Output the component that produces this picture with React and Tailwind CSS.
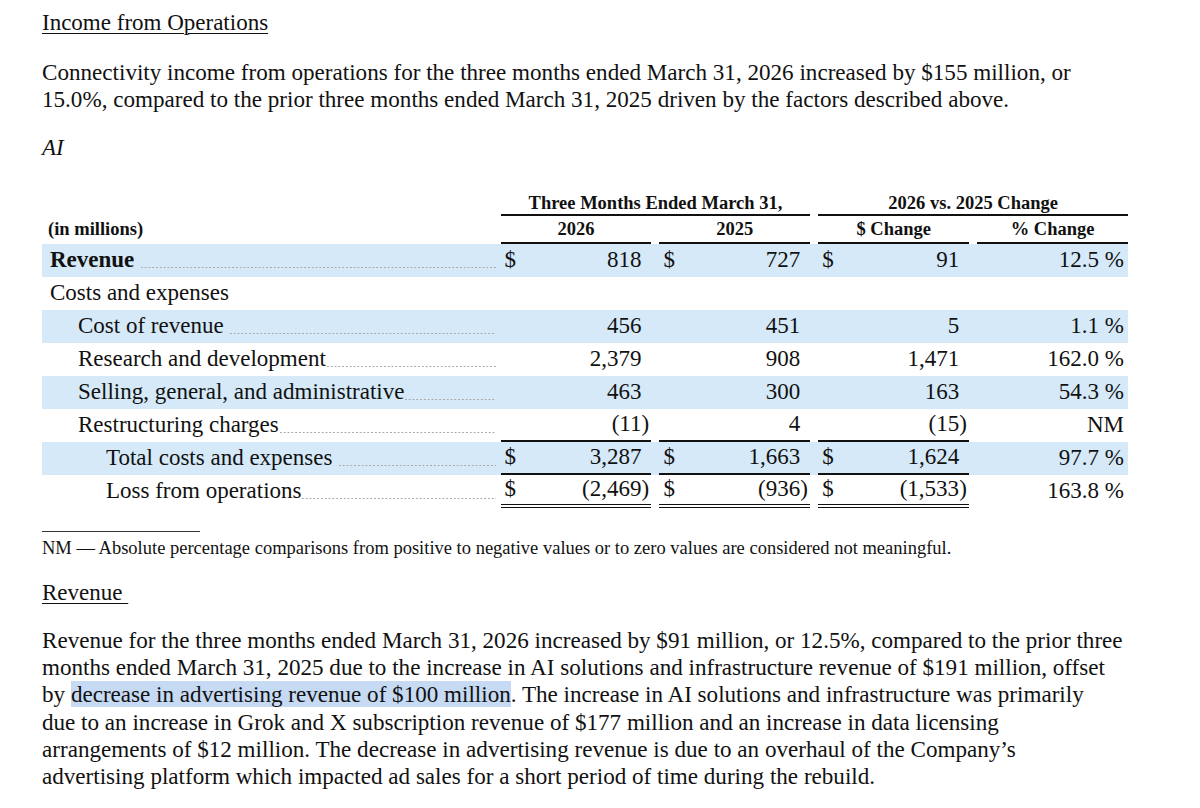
import React from "react";

const rows = [
  { label: "Revenue", bold: true, indent: 0, dots: true, space: true, bg: true, dollar: true, vals: ["818", "727", "91"], pct: "12.5 %" },
  { label: "Costs and expenses", indent: 0, dots: false, bg: false, vals: ["", "", ""], pct: "" },
  { label: "Cost of revenue", indent: 1, dots: true, space: true, bg: true, vals: ["456", "451", "5"], pct: "1.1 %" },
  { label: "Research and development", indent: 1, dots: true, bg: false, vals: ["2,379", "908", "1,471"], pct: "162.0 %" },
  { label: "Selling, general, and administrative", indent: 1, dots: true, bg: true, vals: ["463", "300", "163"], pct: "54.3 %" },
  { label: "Restructuring charges", indent: 1, dots: true, bg: false, vals: ["(11)", "4", "(15)"], pct: "NM", line: "single" },
  { label: "Total costs and expenses", indent: 2, dots: true, space: true, bg: true, dollar: true, vals: ["3,287", "1,663", "1,624"], pct: "97.7 %", line: "single" },
  { label: "Loss from operations", indent: 2, dots: true, bg: false, dollar: true, vals: ["(2,469)", "(936)", "(1,533)"], pct: "163.8 %", line: "double" },
];

function Num({ v }) {
  // hang the closing paren past the digits like the filing does
  const neg = v.endsWith(")");
  const body = neg ? v.slice(0, -1) : v;
  return (
    <span className="flex">
      <span>{body}</span>
      <span className="w-[7px]">{neg ? ")" : ""}</span>
    </span>
  );
}

function Row({ r }) {
  const indent = r.indent === 0 ? "pl-[8px]" : r.indent === 1 ? "pl-[36px]" : "pl-[64px]";
  return (
    <div className={`flex h-[33px] ${r.bg ? "bg-[#d5e9f9]" : ""}`}>
      <div className={`w-[459px] pr-[5px] flex items-center ${indent}`}>
        <span className={`whitespace-nowrap ${r.bold ? "font-bold" : ""}`}>
          {r.label}
          {r.space ? "\u00a0" : ""}
        </span>
        {r.dots && (
          <span className="flex-1 h-[3px] self-end mb-[8px] bg-[radial-gradient(circle,#a8a8a8_0.6px,transparent_1px)] bg-[length:3.8px_3px] bg-repeat-x" />
        )}
      </div>
      {r.vals.map((v, i) => (
        <div
          key={i}
          className={`w-[151px] flex justify-between items-center pl-[4px] pr-[3px] ${i > 0 ? "ml-[8px]" : ""} ${
            r.line === "single" ? "border-b-2 border-[#111]" : r.line === "double" ? "border-b-[4px] border-double border-[#111]" : ""
          }`}
        >
          <span>{r.dollar ? "$" : ""}</span>
          {v && <Num v={v} />}
        </div>
      ))}
      <div className="w-[151px] ml-[8px] flex justify-end items-center pr-[4px]">{r.pct}</div>
    </div>
  );
}

export default function App() {
  return (
    <div
      className="w-[1200px] h-[808px] bg-white text-[#111] pl-[42px] overflow-hidden"
      style={{ fontFamily: '"Liberation Serif", "Times New Roman", serif' }}
    >
      <div className="pt-[9px] text-[23px] leading-[27px]">
        <span className="underline underline-offset-[3px] decoration-1">Income from Operations</span>
      </div>

      <p className="mt-[23px] text-[23.1px] leading-[27px] whitespace-nowrap">
        Connectivity income from operations for the three months ended March 31, 2026 increased by $155 million, or
        <br />
        15.0%, compared to the prior three months ended March 31, 2025 driven by the factors described above.
      </p>

      <div className="mt-[21px] text-[23px] leading-[27px] italic">AI</div>

      {/* table */}
      <div className="mt-[31px] w-[1086px] text-[23px]">
        <div className="flex h-[24px] text-[18.5px] font-bold">
          <div className="w-[459px]" />
          <div className="w-[310px] text-center leading-[22px] border-b-2 border-[#111]">Three Months Ended March 31,</div>
          <div className="w-[310px] ml-[8px] text-center leading-[22px] border-b-2 border-[#111]">2026 vs. 2025 Change</div>
        </div>
        <div className="flex h-[28px] text-[18.5px] font-bold">
          <div className="w-[459px] pl-[6px] leading-[26px]">(in millions)</div>
          <div className="w-[151px] text-center leading-[26px] border-b-2 border-[#111]">2026</div>
          <div className="w-[151px] ml-[8px] text-center leading-[26px] border-b-2 border-[#111]">2025</div>
          <div className="w-[151px] ml-[8px] text-center leading-[26px] border-b-2 border-[#111]">$ Change</div>
          <div className="w-[151px] ml-[8px] text-center leading-[26px] border-b-2 border-[#111]">% Change</div>
        </div>
        {rows.map((r) => (
          <Row key={r.label} r={r} />
        ))}
      </div>

      <div className="mt-[23px] w-[158px] h-px bg-[#333]" />
      <p className="mt-[6px] text-[18.5px] leading-[20px] whitespace-nowrap">
        NM — Absolute percentage comparisons from positive to negative values or to zero values are considered not meaningful.
      </p>

      <div className="mt-[21px] text-[23px] leading-[27px]">
        <span className="underline underline-offset-[3px] decoration-1 whitespace-pre">Revenue </span>
      </div>

      <p className="mt-[21px] text-[23.1px] leading-[27.2px] whitespace-nowrap">
        Revenue for the three months ended March 31, 2026 increased by $91 million, or 12.5%, compared to the prior three
        <br />
        months ended March 31, 2025 due to the increase in AI solutions and infrastructure revenue of $191 million, offset
        <br />
        by <span className="bg-[#c6daf4]">decrease in advertising revenue of $100 million</span>. The increase in AI solutions and infrastructure was primarily
        <br />
        due to an increase in Grok and X subscription revenue of $177 million and an increase in data licensing
        <br />
        arrangements of $12 million. The decrease in advertising revenue is due to an overhaul of the Company’s
        <br />
        advertising platform which impacted ad sales for a short period of time during the rebuild.
      </p>
    </div>
  );
}
